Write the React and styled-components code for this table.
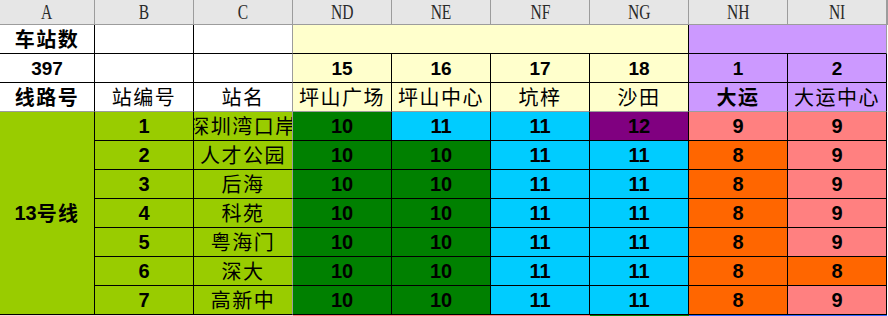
import React from 'react';
import styled, { createGlobalStyle } from 'styled-components';

const GlobalStyle = createGlobalStyle`
  *{
    margin: 0;
    padding: 0;
    box-sizing: border-box;
  }
  body{
    background: #fff;
    overflow: hidden;
  }
`;

const C = {
  yellow: '#FFFFCC',
  lilac: '#CC99FF',
  lime: '#99CC00',
  green: '#008000',
  cyan: '#00CCFF',
  purple: '#800080',
  salmon: '#FF8080',
  orange: '#FF6600',
  grid: '#9c9c9c',
};

const Sheet = styled.div`
  display: grid;
  width: 888px;
  grid-template-columns: 95px repeat(8, 99px) 1px;
  grid-template-rows: 25px repeat(10, 29px) 4px;
  background: #fff;
`;

const ColHead = styled.div`
  display: flex;
  align-items: center;
  justify-content: center;
  background: #e6e6e6;
  border-right: 1px solid ${C.grid};
  border-bottom: 1px solid ${C.grid};
  font-family: "Liberation Serif", serif;
  font-size: 21px;
  color: #2a2a2a;

  span{
    display: inline-block;
    transform: scaleX(0.74);
  }
`;

const Cell = styled.div`
  display: flex;
  align-items: center;
  justify-content: center;
  overflow: hidden;
  white-space: nowrap;
  background: ${p => p.$bg || '#fff'};
  border-right: 1px solid ${p => p.$rc || '#000'};
  border-bottom: 1px solid ${p => p.$bc || '#000'};
  grid-column: span ${p => p.$span || 1};
  grid-row: span ${p => p.$rows || 1};
  color: #000;
`;

const Num = styled.span`
  font-family: "Liberation Sans", Arial, sans-serif;
  font-weight: bold;
  font-size: ${p => p.$size || 20}px;
  line-height: 1;
`;

const Han = styled.span`
  font-family: "Noto Sans CJK SC", "Noto Sans", sans-serif;
  font-weight: ${p => (p.$bold ? 700 : 400)};
  font-size: 20px;
  letter-spacing: 1.5px;
  line-height: 1;
`;

const Strip = styled.div`
  background: ${p => p.$bg};
  grid-column: span ${p => p.$span || 1};
`;

const cols = ['A', 'B', 'C', 'ND', 'NE', 'NF', 'NG', 'NH', 'NI'];

const heads = [
  { no: 15, name: '坪山广场', bg: C.yellow },
  { no: 16, name: '坪山中心', bg: C.yellow },
  { no: 17, name: '坑梓', bg: C.yellow },
  { no: 18, name: '沙田', bg: C.yellow },
  { no: 1, name: '大运', bg: C.lilac, bold: true },
  { no: 2, name: '大运中心', bg: C.lilac },
];

const G = [10, C.green];
const B = [11, C.cyan];
const O = [8, C.orange];
const S = [9, C.salmon];

const stations = [
  { no: 1, name: '深圳湾口岸', vals: [G, B, B, [12, C.purple], S, S] },
  { no: 2, name: '人才公园', vals: [G, G, B, B, O, S] },
  { no: 3, name: '后海', vals: [G, G, B, B, O, S] },
  { no: 4, name: '科苑', vals: [G, G, B, B, O, S] },
  { no: 5, name: '粤海门', vals: [G, G, B, B, O, S] },
  { no: 6, name: '深大', vals: [G, G, B, B, O, O] },
  { no: 7, name: '高新中', vals: [G, G, B, B, O, S] },
];

function App() {
  return (
    <>
      <GlobalStyle />
      <Sheet>
        {cols.map(c => (
          <ColHead key={c}><span>{c}</span></ColHead>
        ))}
        <ColHead />

        {/* 第一行 */}
        <Cell><Han $bold>车站数</Han></Cell>
        <Cell />
        <Cell $rc={C.grid} />
        <Cell $bg={C.yellow} $span={4} />
        <Cell $bg={C.lilac} $span={2} $rc={C.grid} />
        <Strip $bg="#fff" />

        {/* 第二行 */}
        <Cell><Num $size={19}>397</Num></Cell>
        <Cell />
        <Cell $rc={C.grid} />
        {heads.map(h => (
          <Cell key={h.no + h.name} $bg={h.bg}><Num $size={19}>{h.no}</Num></Cell>
        ))}
        <Strip $bg="#fff" />

        {/* 第三行 */}
        <Cell $bc={C.grid}><Han $bold>线路号</Han></Cell>
        <Cell $bc={C.grid}><Han>站编号</Han></Cell>
        <Cell $bc={C.grid} $rc={C.grid}><Han>站名</Han></Cell>
        {heads.map(h => (
          <Cell key={h.name} $bg={h.bg} $bc={C.grid}><Han $bold={h.bold}>{h.name}</Han></Cell>
        ))}
        <Strip $bg="#fff" />

        {/* 数据 */}
        <Cell $bg={C.lime} $rows={7}>
          <Num>13</Num><Han $bold>号线</Han>
        </Cell>
        {stations.map(s => (
          <React.Fragment key={s.no}>
            <Cell $bg={C.lime}><Num>{s.no}</Num></Cell>
            <Cell $bg={C.lime} $rc={C.grid}><Han>{s.name}</Han></Cell>
            {s.vals.map(([v, bg], i) => (
              <Cell key={i} $bg={bg}><Num>{v}</Num></Cell>
            ))}
            <Strip $bg="#fff" />
          </React.Fragment>
        ))}

        <Strip $bg="#f6d6d6" $span={3} />
        <Strip $bg={C.salmon} $span={3} />
        <Strip $bg={C.green} />
        <Strip $bg="#3366ff" $span={2} />
        <Strip $bg="#fff" />
      </Sheet>
    </>
  );
}

export default App;
